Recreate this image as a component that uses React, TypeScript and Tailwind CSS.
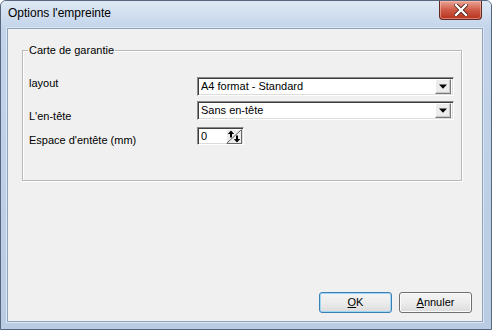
import React from "react";

const font = { fontFamily: '"Liberation Sans", Arial, sans-serif' };

function DropButton() {
  return (
    <div className="w-[16px] h-[15px] bg-[#ececec] border-t border-l border-t-white border-l-white border-b border-r border-b-[#7a7a7a] border-r-[#7a7a7a] shadow-[inset_-1px_-1px_0_#c8c8c8] flex items-center justify-center">
      <svg width="8" height="5" viewBox="0 0 8 5">
        <path d="M0 0.5 H8 L4 4.8 Z" fill="#000" />
      </svg>
    </div>
  );
}

function Combo({ value }: { value: string }) {
  return (
    <div className="h-[19px] w-[257px] bg-white border border-t-[#8a8a8a] border-l-[#8a8a8a] border-b-white border-r-white shadow-[inset_1px_1px_0_#3f3f3f,inset_-1px_-1px_0_#dcdcdc] flex items-center pl-[3px] pr-[2px]">
      <span className="flex-1 text-[11px] leading-[13px] text-black">{value}</span>
      <DropButton />
    </div>
  );
}

function Spin() {
  return (
    <div className="h-[18px] w-[47px] bg-white border border-t-[#8a8a8a] border-l-[#8a8a8a] border-b-white border-r-white shadow-[inset_1px_1px_0_#3f3f3f,inset_-1px_-1px_0_#dcdcdc] flex items-center pl-[3px] pr-[1px]">
      <span className="flex-1 text-[11px] leading-[13px] text-black">0</span>
      <div className="w-[16px] h-[15px] bg-[#ececec] border-t border-l border-t-white border-l-white border-b border-r border-b-[#6a6a6a] border-r-[#6a6a6a]">
        <svg width="14" height="13" viewBox="0 0 14 13">
          <line x1="0" y1="13" x2="14" y2="0" stroke="#606060" strokeWidth="1" />
          <path d="M4 0.5 L0.8 4 H3 V7.5 H5 V4 H7.2 Z" fill="#000" />
          <path d="M10 12.5 L6.8 9 H9 V5.5 H11 V9 H13.2 Z" fill="#000" />
        </svg>
      </div>
    </div>
  );
}

function WinButton({ label, accel, primary }: { label: string; accel: string; primary?: boolean }) {
  return (
    <button
      className={
        "w-[73px] h-[21px] rounded-[3px] text-[11px] leading-[13px] text-black flex items-center justify-center bg-gradient-to-b from-[#f4f4f4] via-[#ececec] to-[#dcdcdc] " +
        (primary
          ? "border border-[#3c7fb1] shadow-[inset_0_0_0_1px_#9fd6f6]"
          : "border border-[#707070] shadow-[inset_0_0_0_1px_#fbfbfb]")
      }
    >
      <span>
        <span className="underline">{accel}</span>
        {label}
      </span>
    </button>
  );
}

export default function App() {
  return (
    <div
      className="w-[492px] h-[330px] flex flex-col bg-[#b9cce3] border border-[#56677d] rounded-t-[6px] overflow-hidden"
      style={font}
    >
      {/* Title bar */}
      <div className="h-[27px] flex items-start bg-gradient-to-b from-[#dfe9f5] to-[#c3d4ea]">
        <span className="mt-[5px] ml-[7px] text-[12px] leading-[15px] text-black">Options l'empreinte</span>
        <div className="flex-1" />
        <div className="mr-[9px] w-[43px] h-[19px] rounded-b-[4px] border border-t-0 border-[#5f2a22] bg-gradient-to-b from-[#e9a597] via-[#cf5a45] to-[#b7301c] shadow-[inset_0_0_0_1px_rgba(255,200,190,0.5)] flex items-center justify-center">
          <svg width="14" height="12" viewBox="0 0 14 12">
            <path d="M2 1 L12 11 M12 1 L2 11" stroke="#4a1f1a" strokeWidth="4" strokeLinecap="square" />
            <path d="M2 1 L12 11 M12 1 L2 11" stroke="#ffffff" strokeWidth="2.4" strokeLinecap="square" />
          </svg>
        </div>
      </div>
      {/* Body */}
      <div className="flex-1 flex px-[6px] pb-[7px] pr-[8px] bg-gradient-to-b from-[#c3d4ea] to-[#b9cce3]">
        <div className="flex-1 flex flex-col bg-[#f0f0f0] border border-[#8fa3bd] shadow-[0_0_0_1px_#dde7f3]">
          {/* Group box */}
          <div className="relative mt-[21px] ml-[14px] w-[440px] h-[131px] border border-[#b9b9b9] shadow-[inset_1px_1px_0_#ffffff,1px_1px_0_#ffffff] flex">
            <span className="absolute left-[5px] top-[-8px] px-[1px] bg-[#f0f0f0] text-[11px] leading-[14px] text-black">
              Carte de garantie
            </span>
            <div className="w-[174px] pl-[6px] flex flex-col text-[11px] leading-[14px] text-black">
              <span className="mt-[25px]">layout</span>
              <span className="mt-[19px]">L'en-tête</span>
              <span className="mt-[10px]">Espace d'entête (mm)</span>
            </div>
            <div className="flex flex-col">
              <div className="mt-[26px]">
                <Combo value="A4 format - Standard" />
              </div>
              <div className="mt-[5px]">
                <Combo value="Sans en-tête" />
              </div>
              <div className="mt-[7px]">
                <Spin />
              </div>
            </div>
          </div>
          <div className="flex-1" />
          <div className="flex justify-end gap-[7px] pr-[10px] pb-[8px]">
            <WinButton accel="O" label="K" primary />
            <WinButton accel="A" label="nnuler" />
          </div>
        </div>
      </div>
    </div>
  );
}
